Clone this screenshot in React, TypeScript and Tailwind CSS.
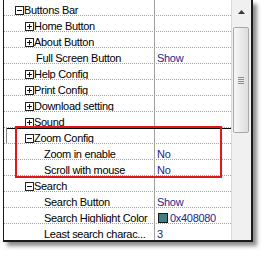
import React from "react";

type Row = {
  label: string;
  kind: "l1box" | "l2box" | "leaf2" | "leaf3";
  box?: "plus" | "minus";
  value?: string;
  swatch?: string;
  selected?: boolean;
};

const rows: Row[] = [
  { label: "Buttons Bar", kind: "l1box", box: "minus" },
  { label: "Home Button", kind: "l2box", box: "plus" },
  { label: "About Button", kind: "l2box", box: "plus" },
  { label: "Full Screen Button", kind: "leaf2", value: "Show" },
  { label: "Help Config", kind: "l2box", box: "plus" },
  { label: "Print Config", kind: "l2box", box: "plus" },
  { label: "Download setting", kind: "l2box", box: "plus" },
  { label: "Sound", kind: "l2box", box: "plus" },
  { label: "Zoom Config", kind: "l2box", box: "minus", selected: true },
  { label: "Zoom in enable", kind: "leaf3", value: "No" },
  { label: "Scroll with mouse", kind: "leaf3", value: "No" },
  { label: "Search", kind: "l2box", box: "minus" },
  { label: "Search Button", kind: "leaf3", value: "Show" },
  { label: "Search Highlight Color", kind: "leaf3", value: "0x408080", swatch: "#408080" },
  { label: "Least search charac...", kind: "leaf3", value: "3" },
];

const padFor: Record<Row["kind"], string> = {
  l1box: "pl-[11px]",
  l2box: "pl-[21px]",
  leaf2: "pl-[32px]",
  leaf3: "pl-[40px]",
};

function ExpandBox({ type }: { type: "plus" | "minus" }) {
  return (
    <svg width="9" height="9" viewBox="0 0 9 9" className="mt-[3px] shrink-0" shapeRendering="crispEdges">
      <rect x="0.5" y="0.5" width="8" height="8" fill="#fff" stroke="#222" />
      <path d="M2 4.5h5" stroke="#111" />
      {type === "plus" && <path d="M4.5 2v5" stroke="#111" />}
    </svg>
  );
}

export default function App() {
  return (
    <div
      className="w-[271px] h-[261px] bg-white"
      style={{ fontFamily: '"Liberation Sans", Arial, sans-serif' }}
    >
      <div className="ml-[3px] w-[250px] h-[242px] flex bg-white border-l border-l-[#1a1a1a] border-r-2 border-r-[#1a1a1a] border-b-2 border-b-[#1a1a1a] shadow-[4px_4px_4px_rgba(0,0,0,0.45)]">
        <div className="relative w-[227px] h-full flex flex-col">
          {rows.map((r, i) => (
            <div
              key={i}
              className={`relative flex h-[16px] shrink-0 ${
                i < rows.length - 1 ? "border-b border-dotted border-b-[#a3a3a3]" : ""
              }`}
            >
              {r.selected && (
                <>
                  <span className="absolute left-[2px] top-0 right-0 h-px bg-black" />
                  <span className="absolute left-[2px] top-0 bottom-0 w-px bg-[#8a8a8a]" />
                </>
              )}
              <div
                className={`w-[151px] h-full flex items-start pt-[3px] border-r border-r-[#a0a0a0] overflow-hidden whitespace-nowrap ${padFor[r.kind]}`}
              >
                {r.box && <ExpandBox type={r.box} />}
                <span className="text-[11px] leading-[14px] tracking-[-0.3px] text-black">{r.label}</span>
              </div>
              <div className="flex-1 h-full flex items-start pt-[3px] pl-[2px] whitespace-nowrap">
                {r.swatch && (
                  <span className="mt-[2px] ml-[1px] mr-[2px] w-[10px] h-[10px] border border-[#1a1a1a] bg-[#408080] shrink-0" />
                )}
                {r.value && (
                  <span className="text-[11px] leading-[14px] tracking-[-0.3px] text-[#1e1e8c]">{r.value}</span>
                )}
              </div>
            </div>
          ))}
          <div className="absolute left-[11px] top-[126px] w-[207px] h-[52px] border-2 border-[#e3161a]" />
        </div>
        <div className="w-[20px] h-full bg-[#f0f0f0] border-l border-l-[#dadada] flex flex-col">
          <div className="h-[27px] flex justify-center pt-[10px]">
            <svg width="7" height="4" viewBox="0 0 7 4">
              <polygon points="3.5,0 7,4 0,4" fill="#3a3a3a" />
            </svg>
          </div>
          <div className="ml-[1px] w-[16px] h-[106px] rounded-[2px] border border-[#a9a9a9] bg-gradient-to-r from-[#f7f7f7] to-[#dedede] flex flex-col items-center justify-center gap-[1px]">
            <span className="w-[6px] h-px bg-[#8c8c8c]" />
            <span className="w-[6px] h-px bg-[#8c8c8c]" />
            <span className="w-[6px] h-px bg-[#8c8c8c]" />
            <span className="w-[6px] h-px bg-[#8c8c8c]" />
          </div>
        </div>
      </div>
    </div>
  );
}
